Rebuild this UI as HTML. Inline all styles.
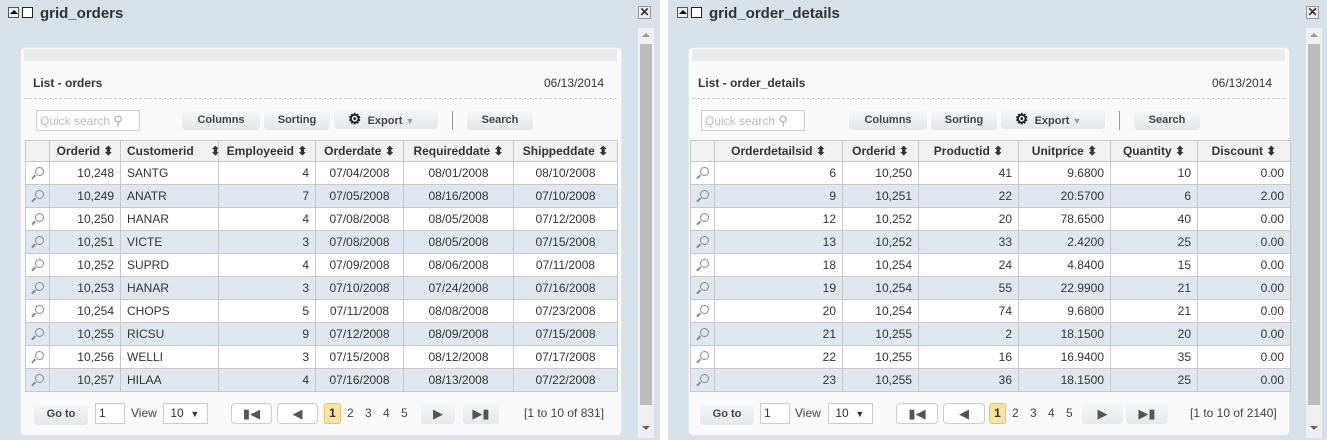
<!DOCTYPE html><html><head><style>
*{margin:0;padding:0;box-sizing:border-box}
body{width:1327px;height:440px;overflow:hidden;background:#fff;font-family:"Liberation Sans",Arial,sans-serif;font-size:12px;color:#333;position:relative}
.pan{position:absolute;top:0;height:440px;background:#d7e2eb}
.a{position:absolute}
.ttl{font-size:15px;font-weight:bold;color:#333}
.ic{position:absolute;width:11px;height:11px;border:1px solid #555;background:#fff}
.box{position:absolute;background:#fafafa;border-radius:5px;border:1px solid #e3e8ec}
.band{position:absolute;background:#ebebeb;height:12px}
.dash{position:absolute;border-top:1px dashed #ccc;height:0}
.btn{position:absolute;height:19px;background:linear-gradient(#f5f7f8,#e3e8ec);border-radius:4px;font-size:11px;font-weight:bold;color:#444;text-align:center;line-height:19px}
.qs{position:absolute;height:21px;border:1px solid #ccc;background:#fff;color:#bbb;font-size:12px;line-height:19px;padding-left:3px}
table{position:absolute;border-collapse:collapse;table-layout:fixed;font-size:12px}
td,th{border:1px solid #c8c8c8;height:23px;padding:0 6px;white-space:nowrap;overflow:hidden}
th{background:#f2f2f2;height:21px;font-weight:bold;color:#333;text-align:center}
td{text-align:right}
td.l{text-align:left}td.c{text-align:center}
tr:nth-child(odd) td{background:#dfe7f0}
tr:nth-child(even) td{background:#fff}
.mg{display:inline-block;width:9px;height:9px;border:1.5px solid #888;border-radius:50%;position:relative;top:-1px}
.mg:after{content:"";position:absolute;width:5px;height:1.5px;background:#888;left:-5px;top:8px;transform:rotate(-45deg)}
td.m{padding:0 0 0 9px;text-align:left}
.sb{position:absolute;width:16px;background:#f0f0f0}
.th{position:absolute;left:2px;width:12px;background:#bcbcbc}
.pg{position:absolute;height:21px;border:1px solid #ccc;border-radius:4px;background:#fff;text-align:center;line-height:19px;font-size:13px;color:#555}
.pg2{position:absolute;height:21px;border-radius:4px;background:linear-gradient(#f6f7f8,#e6eaed);text-align:center;line-height:21px;font-size:13px;color:#555}
.num{position:absolute;font-size:12px;color:#444;top:406px}
</style></head><body>

<!-- LEFT PANEL -->
<div class="pan" style="left:0;width:660px">
<div class="ic" style="left:8px;top:7px;background:#eee"><div style="position:absolute;left:1px;top:2px;border-left:4px solid transparent;border-right:4px solid transparent;border-bottom:4px solid #000"></div></div>
<div class="ic" style="left:22px;top:7px;border:1.5px solid #222"></div>
<div class="a ttl" style="left:40px;top:5px">grid_orders</div>
<div class="a" style="left:638px;top:6px;width:13px;height:13px;background:#eee;border:1px solid #999;font-size:12px;font-weight:bold;line-height:11px;text-align:center">✕</div>
<div class="sb" style="left:638px;top:28px;height:410px"><div class="a" style="left:4px;top:5px;border-left:4px solid transparent;border-right:4px solid transparent;border-bottom:4px solid #999"></div><div class="th" style="top:16px;height:361px"></div><div class="a" style="left:4px;top:398px;border-left:4px solid transparent;border-right:4px solid transparent;border-top:4px solid #666"></div></div>
<div class="box" style="left:20px;top:47px;width:602px;height:389px"></div>
<div class="band" style="left:24px;top:49px;width:593px"></div>
<div class="a" style="left:33px;top:76px;font-size:12px;font-weight:bold;color:#333">List - orders</div>
<div class="a" style="left:544px;top:76px;font-size:12px;color:#333">06/13/2014</div>
<div class="dash" style="left:24px;top:98px;width:593px"></div>
<div class="qs" style="left:36px;top:110px;width:104px">Quick search <span style="color:#aaa;font-size:13px">⚲</span></div>
<div class="btn" style="left:182px;top:111px;width:78px">Columns</div>
<div class="btn" style="left:264px;top:111px;width:66px">Sorting</div>
<div class="btn" style="left:334px;top:110px;width:104px;text-align:left;padding-left:14px"><span style="font-size:15px;color:#222">⚙</span>&nbsp; Export <span style="color:#999;font-size:9px">▼</span></div>
<div class="a" style="left:452px;top:111px;width:1px;height:19px;background:#999"></div>
<div class="btn" style="left:467px;top:111px;width:66px">Search</div>
<table style="left:25px;top:140px;width:592px">
<colgroup><col style="width:24px"><col style="width:71px"><col style="width:98px"><col style="width:97px"><col style="width:88px"><col style="width:110px"><col style="width:104px"></colgroup>
<tr><th></th><th>Orderid ⬍</th><th style="text-align:left">Customerid &nbsp; &nbsp; ⬍</th><th>Employeeid ⬍</th><th>Orderdate ⬍</th><th>Requireddate ⬍</th><th>Shippeddate ⬍</th></tr>
<tr><td class="m"><span class="mg"></span></td><td>10,248</td><td class="l">SANTG</td><td>4</td><td class="c">07/04/2008</td><td class="c">08/01/2008</td><td class="c">08/10/2008</td></tr>
<tr><td class="m"><span class="mg"></span></td><td>10,249</td><td class="l">ANATR</td><td>7</td><td class="c">07/05/2008</td><td class="c">08/16/2008</td><td class="c">07/10/2008</td></tr>
<tr><td class="m"><span class="mg"></span></td><td>10,250</td><td class="l">HANAR</td><td>4</td><td class="c">07/08/2008</td><td class="c">08/05/2008</td><td class="c">07/12/2008</td></tr>
<tr><td class="m"><span class="mg"></span></td><td>10,251</td><td class="l">VICTE</td><td>3</td><td class="c">07/08/2008</td><td class="c">08/05/2008</td><td class="c">07/15/2008</td></tr>
<tr><td class="m"><span class="mg"></span></td><td>10,252</td><td class="l">SUPRD</td><td>4</td><td class="c">07/09/2008</td><td class="c">08/06/2008</td><td class="c">07/11/2008</td></tr>
<tr><td class="m"><span class="mg"></span></td><td>10,253</td><td class="l">HANAR</td><td>3</td><td class="c">07/10/2008</td><td class="c">07/24/2008</td><td class="c">07/16/2008</td></tr>
<tr><td class="m"><span class="mg"></span></td><td>10,254</td><td class="l">CHOPS</td><td>5</td><td class="c">07/11/2008</td><td class="c">08/08/2008</td><td class="c">07/23/2008</td></tr>
<tr><td class="m"><span class="mg"></span></td><td>10,255</td><td class="l">RICSU</td><td>9</td><td class="c">07/12/2008</td><td class="c">08/09/2008</td><td class="c">07/15/2008</td></tr>
<tr><td class="m"><span class="mg"></span></td><td>10,256</td><td class="l">WELLI</td><td>3</td><td class="c">07/15/2008</td><td class="c">08/12/2008</td><td class="c">07/17/2008</td></tr>
<tr><td class="m"><span class="mg"></span></td><td>10,257</td><td class="l">HILAA</td><td>4</td><td class="c">07/16/2008</td><td class="c">08/13/2008</td><td class="c">07/22/2008</td></tr>
</table>
<div class="btn" style="left:34px;top:404px;width:54px;height:21px;line-height:21px">Go to</div>
<div class="qs" style="left:95px;top:403px;width:30px;color:#333">1</div>
<div class="num" style="left:131px">View</div>
<div class="qs" style="left:163px;top:403px;width:45px;color:#333">&nbsp;10 &nbsp;<span style="font-size:9px">▼</span></div>
<div class="pg" style="left:231px;top:403px;width:41px">▮◀</div>
<div class="pg" style="left:277px;top:403px;width:41px">◀</div>
<div class="a" style="left:324px;top:403px;width:17px;height:21px;background:#fbe3a0;border:1px solid #e3c36a;border-radius:3px;text-align:center;line-height:19px;font-weight:bold">1</div>
<div class="num" style="left:347px">2</div><div class="num" style="left:365px">3</div><div class="num" style="left:383px">4</div><div class="num" style="left:401px">5</div>
<div class="pg2" style="left:421px;top:403px;width:34px">▶</div>
<div class="pg2" style="left:463px;top:403px;width:36px">▶▮</div>
<div class="num" style="left:524px">[1 to 10 of 831]</div>
</div>

<!-- RIGHT PANEL -->
<div class="pan" style="left:668px;width:659px">
<div class="ic" style="left:9px;top:7px;background:#eee"><div style="position:absolute;left:1px;top:2px;border-left:4px solid transparent;border-right:4px solid transparent;border-bottom:4px solid #000"></div></div>
<div class="ic" style="left:23px;top:7px;border:1.5px solid #222"></div>
<div class="a ttl" style="left:41px;top:5px">grid_order_details</div>
<div class="a" style="left:638px;top:6px;width:13px;height:13px;background:#eee;border:1px solid #999;font-size:12px;font-weight:bold;line-height:11px;text-align:center">✕</div>
<div class="sb" style="left:638px;top:28px;height:410px"><div class="a" style="left:4px;top:5px;border-left:4px solid transparent;border-right:4px solid transparent;border-bottom:4px solid #999"></div><div class="th" style="top:16px;height:361px"></div><div class="a" style="left:4px;top:398px;border-left:4px solid transparent;border-right:4px solid transparent;border-top:4px solid #666"></div></div>
<div class="box" style="left:20px;top:47px;width:602px;height:389px"></div>
<div class="band" style="left:24px;top:49px;width:593px"></div>
<div class="a" style="left:30px;top:76px;font-size:12px;font-weight:bold;color:#333">List - order_details</div>
<div class="a" style="left:544px;top:76px;font-size:12px;color:#333">06/13/2014</div>
<div class="dash" style="left:24px;top:98px;width:593px"></div>
<div class="qs" style="left:33px;top:110px;width:104px">Quick search <span style="color:#aaa;font-size:13px">⚲</span></div>
<div class="btn" style="left:181px;top:111px;width:78px">Columns</div>
<div class="btn" style="left:263px;top:111px;width:66px">Sorting</div>
<div class="btn" style="left:333px;top:110px;width:104px;text-align:left;padding-left:14px"><span style="font-size:15px;color:#222">⚙</span>&nbsp; Export <span style="color:#999;font-size:9px">▼</span></div>
<div class="a" style="left:451px;top:111px;width:1px;height:19px;background:#999"></div>
<div class="btn" style="left:466px;top:111px;width:66px">Search</div>
<table style="left:22px;top:140px;width:600px">
<colgroup><col style="width:24px"><col style="width:128px"><col style="width:76px"><col style="width:100px"><col style="width:92px"><col style="width:87px"><col style="width:93px"></colgroup>
<tr><th></th><th>Orderdetailsid ⬍</th><th>Orderid ⬍</th><th>Productid ⬍</th><th>Unitprice ⬍</th><th>Quantity ⬍</th><th>Discount ⬍</th></tr>
<tr><td class="m"><span class="mg"></span></td><td>6</td><td>10,250</td><td>41</td><td>9.6800</td><td>10</td><td>0.00</td></tr>
<tr><td class="m"><span class="mg"></span></td><td>9</td><td>10,251</td><td>22</td><td>20.5700</td><td>6</td><td>2.00</td></tr>
<tr><td class="m"><span class="mg"></span></td><td>12</td><td>10,252</td><td>20</td><td>78.6500</td><td>40</td><td>0.00</td></tr>
<tr><td class="m"><span class="mg"></span></td><td>13</td><td>10,252</td><td>33</td><td>2.4200</td><td>25</td><td>0.00</td></tr>
<tr><td class="m"><span class="mg"></span></td><td>18</td><td>10,254</td><td>24</td><td>4.8400</td><td>15</td><td>0.00</td></tr>
<tr><td class="m"><span class="mg"></span></td><td>19</td><td>10,254</td><td>55</td><td>22.9900</td><td>21</td><td>0.00</td></tr>
<tr><td class="m"><span class="mg"></span></td><td>20</td><td>10,254</td><td>74</td><td>9.6800</td><td>21</td><td>0.00</td></tr>
<tr><td class="m"><span class="mg"></span></td><td>21</td><td>10,255</td><td>2</td><td>18.1500</td><td>20</td><td>0.00</td></tr>
<tr><td class="m"><span class="mg"></span></td><td>22</td><td>10,255</td><td>16</td><td>16.9400</td><td>35</td><td>0.00</td></tr>
<tr><td class="m"><span class="mg"></span></td><td>23</td><td>10,255</td><td>36</td><td>18.1500</td><td>25</td><td>0.00</td></tr>
</table>
<div class="btn" style="left:32px;top:404px;width:54px;height:21px;line-height:21px">Go to</div>
<div class="qs" style="left:92px;top:403px;width:30px;color:#333">1</div>
<div class="num" style="left:127px">View</div>
<div class="qs" style="left:160px;top:403px;width:45px;color:#333">&nbsp;10 &nbsp;<span style="font-size:9px">▼</span></div>
<div class="pg" style="left:228px;top:403px;width:42px">▮◀</div>
<div class="pg" style="left:275px;top:403px;width:42px">◀</div>
<div class="a" style="left:321px;top:403px;width:17px;height:21px;background:#fbe3a0;border:1px solid #e3c36a;border-radius:3px;text-align:center;line-height:19px;font-weight:bold">1</div>
<div class="num" style="left:344px">2</div><div class="num" style="left:362px">3</div><div class="num" style="left:380px">4</div><div class="num" style="left:398px">5</div>
<div class="pg2" style="left:414px;top:403px;width:41px">▶</div>
<div class="pg2" style="left:458px;top:403px;width:42px">▶▮</div>
<div class="num" style="left:522px">[1 to 10 of 2140]</div>
</div>
</body></html>
